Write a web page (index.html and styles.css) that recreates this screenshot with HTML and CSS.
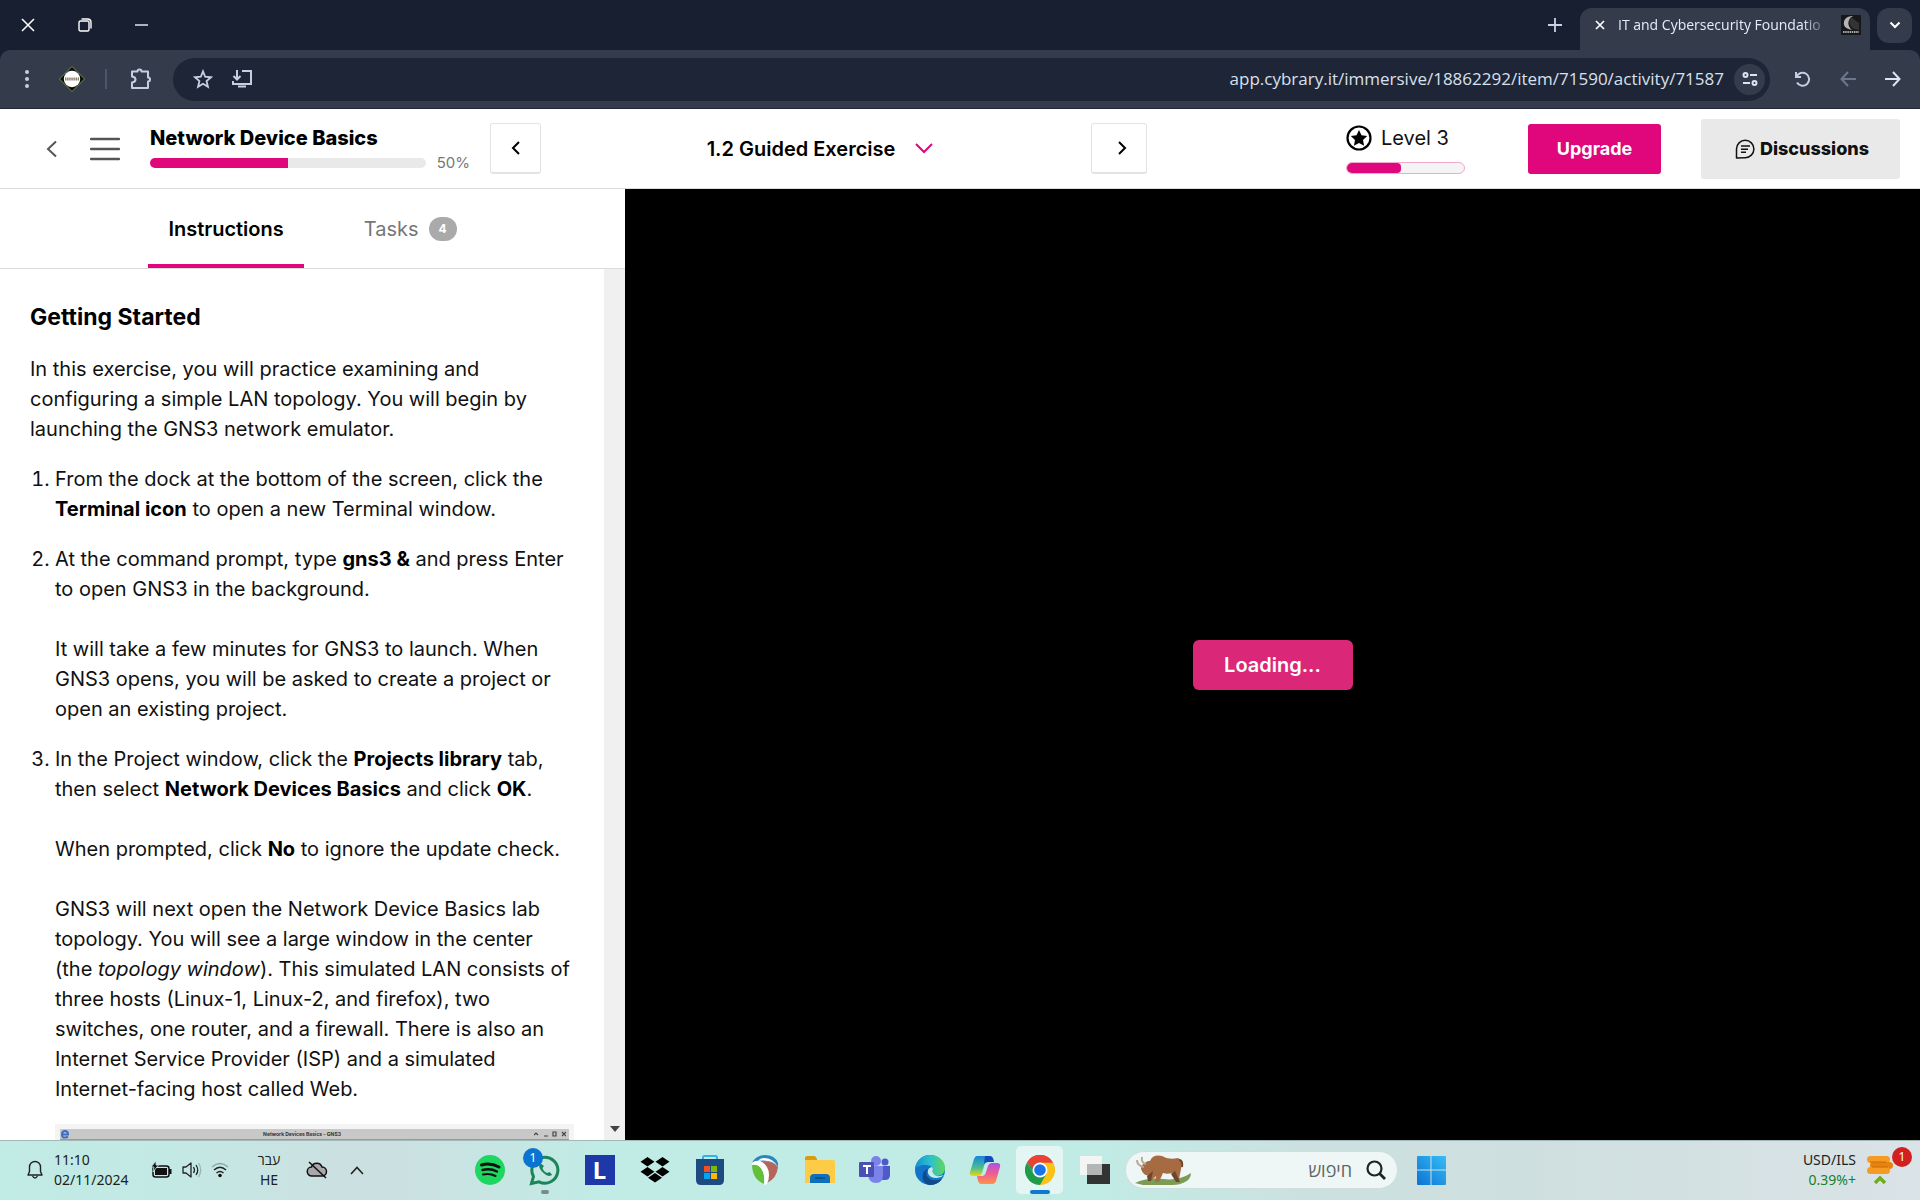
FILE: index.html
```html
<!DOCTYPE html>
<html lang="en">
<head>
<meta charset="utf-8">
<title>IT and Cybersecurity Foundations</title>
<link rel="stylesheet" href="styles.css">
</head>
<body>
<header class="browser">
  <div class="tabstrip">
    <div class="window-controls">
      <button class="icon-btn" aria-label="Close window"><svg width="14" height="14" viewBox="0 0 14 14"><path d="M1 1l12 12M13 1L1 13" stroke="#fff" stroke-width="1.5"/></svg></button>
      <button class="icon-btn" aria-label="Restore window"><svg width="14" height="14" viewBox="0 0 14 14" fill="none" stroke="#fff" stroke-width="1.4"><rect x="1" y="3" width="10" height="10" rx="1.5"/><path d="M3.500 1h6Q13 1 13 4.500v6"/></svg></button>
      <button class="icon-btn" aria-label="Minimize window"><svg width="14" height="14" viewBox="0 0 14 14"><path d="M0 7h13" stroke="#dfe5f0" stroke-width="1.500"/></svg></button>
    </div>
    <div class="tabs-right">
      <button class="icon-btn new-tab" aria-label="New tab"><svg width="14" height="14" viewBox="0 0 14 14"><path d="M7 0v14M0 7h14" stroke="#c9d2e4" stroke-width="1.800"/></svg></button>
      <div class="page-tab">
        <button class="icon-btn" aria-label="Close tab"><svg width="10" height="10" viewBox="0 0 10 10"><path d="M1 1l8 8M9 1L1 9" stroke="#fff" stroke-width="1.700"/></svg></button>
        <span class="page-tab-title">IT and Cybersecurity Foundatio</span>
        <svg width="20" height="20" viewBox="0 0 20 20"><rect width="20" height="20" fill="#17181b"/><path d="M12 1C5 1 2 5 3 10c1 3 4 4 8 5C7 12 5 5 12 1z" fill="#b4b4b4"/><path d="M10 2l8 6v7l-5-1C8 11 7 6 10 2z" fill="#333"/><path d="M2 17h16" stroke="#aaa" stroke-width="2" stroke-dasharray="1.500 .7"/></svg>
      </div>
      <button class="icon-btn tab-search" aria-label="Search tabs"><svg width="12" height="8" viewBox="0 0 12 8" fill="none"><path d="M1.500 1.500L6 6l4.500-4.500" stroke="#fff" stroke-width="2"/></svg></button>
    </div>
  </div>
  <div class="toolbar">
    <button class="icon-btn" aria-label="Browser menu"><svg width="6" height="20" viewBox="0 0 6 20" fill="#c5cfe2"><circle cx="3" cy="3" r="2"/><circle cx="3" cy="10" r="2"/><circle cx="3" cy="17" r="2"/></svg></button>
    <button class="icon-btn profile" aria-label="Profile"><svg width="28" height="28" viewBox="0 0 28 28"><path d="M14 1.500L26.500 14 14 26.500 1.500 14z" fill="#0b0d0a" stroke="#7d8a50"/><circle cx="14" cy="14" r="8.200" fill="#fff"/><path d="M7 14h14" stroke="#8f836c" stroke-width="3" stroke-dasharray="1.500 .6"/></svg></button>
    <span class="divider"></span>
    <button class="icon-btn extensions" aria-label="Extensions"><svg width="22" height="22" viewBox="0 0 22 22" fill="none" stroke="#c5cfe2" stroke-width="2" stroke-linejoin="round"><path d="M2 3.500h5.500Q7.500 1.500 9.500 1.500T11.500 3.500H18v6q2 0 2 2t-2 2v6.500H2v-5.500q3.500-.5 3.500-3T2 8.500z"/></svg></button>
    <div class="address">
      <button class="icon-btn" aria-label="Bookmark"><svg width="20" height="20" viewBox="0 0 24 24" fill="none" stroke="#c5cfe2" stroke-width="2.200"><path d="M12 2.800l2.600 6.500 7 .6-5.300 4.600 1.600 6.800-5.900-3.600-5.900 3.600 1.600-6.800L2.400 9.900l7-.6z"/></svg></button>
      <button class="icon-btn" aria-label="Install app"><svg width="22" height="20" viewBox="0 0 22 20" fill="none" stroke="#c5cfe2" stroke-width="2"><path d="M11 2h9v13H2v-3M6 1v9M2.500 7L6 10.500 9.500 7M7 17.500h8"/></svg></button>
      <input class="url" type="text" aria-label="Address" value="app.cybrary.it/immersive/18862292/item/71590/activity/71587">
      <button class="icon-btn site-info" aria-label="Site information"><svg width="16" height="14" viewBox="0 0 16 14" fill="none" stroke="#dce4f3" stroke-width="2"><circle cx="3.500" cy="3" r="2"/><path d="M8 3h7M1 11h7"/><circle cx="12.500" cy="11" r="2"/></svg></button>
    </div>
    <button class="icon-btn" aria-label="Reload"><svg width="16" height="16" viewBox="0 0 16 16" fill="none" stroke="#c5cfe2" stroke-width="2"><path d="M1 1v5h5M1.500 6A6.500 6.500 0 1 1 2 11.500"/></svg></button>
    <button class="icon-btn" aria-label="Forward"><svg width="16" height="16" viewBox="0 0 16 16" fill="none" stroke="#6c778c" stroke-width="2"><path d="M16 8H2M8 1L1.500 8 8 15"/></svg></button>
    <button class="icon-btn" aria-label="Back"><svg width="16" height="16" viewBox="0 0 16 16" fill="none" stroke="#dce4f3" stroke-width="2"><path d="M0 8h14M8 1l6.500 7L8 15"/></svg></button>
  </div>
</header>

<div class="course-bar">
  <button class="icon-btn" aria-label="Back"><svg width="12" height="18" viewBox="0 0 12 18" fill="none"><path d="M10 1.500L2 9l8 7.500" stroke="#555" stroke-width="2"/></svg></button>
  <button class="icon-btn course-menu" aria-label="Course menu"><svg width="30" height="24" viewBox="0 0 30 24"><path d="M1 2h28M1 12h28M1 22h28" stroke="#555" stroke-width="2.500" stroke-linecap="round"/></svg></button>
  <div class="course">
    <h1 class="course-title">Network Device Basics</h1>
    <div class="course-progress"><div class="track"><div class="fill"></div></div><span>50%</span></div>
  </div>
  <button class="step prev" aria-label="Previous activity"><svg width="10" height="16" viewBox="0 0 10 16" fill="none"><path d="M8 2L2 8l6 6" stroke="#000" stroke-width="2"/></svg></button>
  <button class="activity">1.2 Guided Exercise<svg width="18" height="11" viewBox="0 0 18 11" fill="none"><path d="M1 1l8 8 8-8" stroke="#e0067b" stroke-width="2"/></svg></button>
  <button class="step next" aria-label="Next activity"><svg width="10" height="16" viewBox="0 0 10 16" fill="none"><path d="M2 2l6 6-6 6" stroke="#000" stroke-width="2"/></svg></button>
  <div class="level">
    <div class="level-name"><svg width="26" height="26" viewBox="0 0 26 26"><circle cx="13" cy="13" r="11.500" fill="none" stroke="#000" stroke-width="2.200"/><path d="M13 5l2.500 5.300 5.700.7-4.200 4 1.100 5.700L13 17.900l-5.100 2.800L9 15l-4.200-4 5.700-.7z"/></svg>Level 3</div>
    <div class="level-track"><div class="level-fill"></div></div>
  </div>
  <button class="upgrade">Upgrade</button>
  <button class="discussions"><svg width="20" height="20" viewBox="0 0 20 20" fill="none" stroke="#111" stroke-width="1.500"><path d="M1.500 19v-9a8.700 8.700 0 1 1 8.700 8.700z" stroke-linejoin="round"/><path d="M6 7h9M6 10.200h7M6 13.200h5"/></svg>Discussions</button>
</div>

<div class="workspace">
  <section class="panel">
    <nav class="panel-tabs">
      <button class="panel-tab active">Instructions</button>
      <button class="panel-tab">Tasks<span class="count">4</span></button>
    </nav>
    <div class="panel-body">
      <article class="guide">
        <h2>Getting Started</h2>
        <p>In this exercise, you will practice examining and configuring a simple LAN topology. You will begin by launching the GNS3 network emulator.</p>
        <ol>
          <li><p>From the dock at the bottom of the screen, click the <b>Terminal icon</b> to open a new Terminal window.</p></li>
          <li><p>At the command prompt, type <b>gns3 &amp;</b> and press Enter to open GNS3 in the background.<br><br>It will take a few minutes for GNS3 to launch. When GNS3 opens, you will be asked to create a project or open an existing project.</p></li>
          <li><p>In the Project window, click the <b>Projects library</b> tab, then select <b>Network Devices Basics</b> and click <b>OK</b>.<br><br>When prompted, click <b>No</b> to ignore the update check.<br><br>GNS3 will next open the Network Device Basics lab topology. You will see a large window in the center (the <i>topology window</i>). This simulated LAN consists of three hosts (Linux-1, Linux-2, and firefox), two switches, one router, and a firewall. There is also an Internet Service Provider (ISP) and a simulated Internet-facing host called Web.</p>
            <figure class="shot"><div class="shot-bar"><svg width="10" height="10" viewBox="0 0 10 10" fill="none"><path d="M2 5.500h6Q8 2 5 2T2 5.500 5 8.500q2 0 3-1" stroke="#3f6fc4" stroke-width="2"/></svg><span>Network Devices Basics - GNS3</span><svg width="32" height="6" viewBox="0 0 32 6" fill="none" stroke="#444" stroke-width="1.200"><path d="M0 4l2-2 2 2M10 5h4M19 1h3v4h-3zM28 1l4 4M32 1l-4 4"/></svg></div></figure>
          </li>
        </ol>
      </article>
      <div class="scrollbar"><svg width="12" height="8" viewBox="0 0 12 8"><path d="M1 1h10L6 7z" fill="#444"/></svg></div>
    </div>
  </section>
  <main class="lab"><button class="loading">Loading...</button></main>
</div>

<footer class="taskbar">
  <div class="tray">
    <svg class="bell" width="16" height="20" viewBox="0 0 16 20" fill="none" stroke="#222" stroke-width="1.400" stroke-linejoin="round"><path d="M1 15l1.500-3.500V7a5.500 5.500 0 0 1 11 0v4.500L15 15zM5.500 16q2.500 4 5 0"/></svg>
    <div class="clock"><span>11:10</span><span>02/11/2024</span></div>
    <div class="status">
      <svg width="22" height="18" viewBox="0 0 22 18"><rect x="2" y="5" width="16" height="11" rx="2.500" fill="none" stroke="#111" stroke-width="1.500"/><path d="M4 7h12v7H4zM18 8h2.500v5H18z" fill="#111"/><path d="M5 0L0 6h3L2 11l5.500-7H5z" fill="#111" stroke="#c3e9e4" stroke-width=".8"/></svg>
      <svg width="20" height="18" viewBox="0 0 20 18" fill="none" stroke="#222" stroke-width="1.300"><path d="M1 6h3l5-4v14l-5-4H1z" stroke-linejoin="round"/><path d="M11.500 6q2 3 0 6M14 4q3.500 5 0 10"/><path d="M16.500 2q4.500 7 0 14" stroke="#9bb5b5"/></svg>
      <svg width="18" height="16" viewBox="0 0 18 16" fill="none" stroke="#222" stroke-width="1.400"><path d="M1 5q8-7 16 0" stroke="#8aa5a6"/><path d="M3 8q6-5.500 12 0M5.500 11q3.500-3 7 0"/><circle cx="9" cy="13.500" r="1.800" fill="#111" stroke="none"/></svg>
    </div>
    <div class="language"><span lang="he">עבר</span><span>HE</span></div>
    <svg width="22" height="18" viewBox="0 0 22 18" fill="none" stroke="#111" stroke-width="1.500"><path d="M6 15a4.500 4.500 0 0 1-.5-9 5.500 5.500 0 0 1 10.500 0 4.500 4.500 0 0 1 0 9z" fill="#a9a9ac"/><path d="M3 1l17 16"/></svg>
    <svg class="tray-caret" width="14" height="9" viewBox="0 0 14 9" fill="none"><path d="M1 8l6-6.500L13 8" stroke="#222" stroke-width="1.600"/></svg>
  </div>
  <div class="dock">
    <button class="app" aria-label="Spotify"><svg width="30" height="30" viewBox="0 0 30 30" fill="none"><circle cx="15" cy="15" r="15" fill="#1ed760"/><g stroke="#101010" stroke-linecap="round"><path d="M6.500 10q9-2.500 17.500 2" stroke-width="3"/><path d="M7.500 15q8-2 14.500 1.500" stroke-width="2.400"/><path d="M8 19.500q7-1.500 12.500 1.500" stroke-width="2"/></g></svg></button>
    <button class="app" aria-label="WhatsApp"><svg width="32" height="32" viewBox="0 0 32 32" fill="none"><path d="M2.500 29.500l2-7A13 13 0 1 1 10 27.800z" stroke="#1c8558" stroke-width="3"/><path d="M11 9c-2 3 0 7 3.500 10s7 4 8.500 1.500l-2.500-2.500-2.500 1c-2.500-1-4-3-4.500-5l1.500-2z" fill="#1c8558"/></svg><span class="badge blue">1</span><span class="running"></span></button>
    <button class="app" aria-label="L"><span class="letter">L</span></button>
    <button class="app" aria-label="Dropbox"><svg width="30" height="26" viewBox="0 0 30 26"><path d="M7.500 0l7 4.800-7 4.800-7-4.800zM22.500 0l7 4.800-7 4.800-7-4.800zM7.500 10l7 4.800-7 4.800-7-4.800zM22.500 10l7 4.800-7 4.800-7-4.800zM15 16l7 4.800-7 4.800-7-4.800z"/></svg></button>
    <button class="app" aria-label="Store"><svg width="30" height="30" viewBox="0 0 30 30"><path d="M8 5V2.500Q8 1 9.500 1h11Q22 1 22 2.500V5" fill="none" stroke="#2fb3ea" stroke-width="2"/><path d="M1 4h28v21q0 5-5 5H6q-5 0-5-5z" fill="#1d4a80"/><path d="M9 11h6v6H9z" fill="#f25022"/><path d="M16 11h6v6h-6z" fill="#7fba00"/><path d="M9 18h6v6H9z" fill="#00a4ef"/><path d="M16 18h6v6h-6z" fill="#ffb900"/></svg></button>
    <button class="app" aria-label="Reaper"><svg width="28" height="30" viewBox="0 0 28 30"><path d="M1 8Q5 0 14 0q10 0 13 8v4Q21 5 6 6z" fill="#2c86bd"/><path d="M6 6q16-1 21 6-1 11-11 16Q17 12 6 6z" fill="#b5655a"/><path d="M1 9q9 0 11 8 2 5 1 12Q1 24 1 9z" fill="#62bf3a"/><path d="M1 8q3-3 8-2 9 4 9 14 0 5-2 9l-3 1q1-11-2-15Q8 9 1 10z" fill="#fff"/><path d="M7 6q14-2 20 6-5-9-14-9-4 0-6 3z" fill="#fff"/></svg></button>
    <button class="app" aria-label="Files"><svg width="30" height="28" viewBox="0 0 30 28"><path d="M0 2q0-2 2-2h8l2 3v4H0z" fill="#d69c12"/><path d="M0 4h28q2 0 2 2v21H0z" fill="#fdcb45"/><path d="M5 27v-5q0-4 4-4h12q4 0 4 4v5z" fill="#0c71bd"/><path d="M10 22h10" stroke="#075391" stroke-width="2"/></svg></button>
    <button class="app" aria-label="Teams"><svg width="32" height="28" viewBox="0 0 32 28"><circle cx="17" cy="5" r="5" fill="#7b83eb"/><circle cx="26" cy="6" r="3.500" fill="#5059c9"/><path d="M22 10h9v9q0 5-5 5h-4z" fill="#5059c9"/><path d="M9 10h15v9q0 8-7 8t-8-8z" fill="#7b83eb"/><rect y="6" width="15" height="15" rx="1" fill="#4b50b4"/><path d="M4 10h8M8 10v8" stroke="#fff" stroke-width="2"/></svg></button>
    <button class="app" aria-label="Edge"><svg width="30" height="30" viewBox="0 0 30 30"><defs><linearGradient id="edge-top"><stop offset="0" stop-color="#178fd0"/><stop offset=".5" stop-color="#2cc0cf"/><stop offset="1" stop-color="#61d856"/></linearGradient></defs><circle cx="15" cy="15" r="15" fill="#1174c9"/><path d="M0 14C1 5 8 0 15 0c9 0 15 6 15 13 0 6-5 8-9 8-3 0-5-1-4-3 3-4 0-8-6-8S1 12 0 14z" fill="url(#edge-top)"/><path d="M13 14c-5 5 1 15 14 10-3 4-7 6-12 6C5 29 6 15 13 14z" fill="#114a8b"/><path d="M17 12q-5 1-4 6 1 5 9 5 4 0 7-3-9 3-11-2-1-2 0-4z" fill="#c5ece7"/></svg></button>
    <button class="app" aria-label="Copilot"><svg width="32" height="30" viewBox="0 0 32 30"><defs><linearGradient id="cop-a" x2="0" y2="1"><stop stop-color="#1686dd"/><stop offset=".6" stop-color="#4abf91"/><stop offset="1" stop-color="#f3d30f"/></linearGradient><linearGradient id="cop-b" x2="0" y2="1"><stop stop-color="#b14fe5"/><stop offset=".5" stop-color="#ee5d92"/><stop offset="1" stop-color="#ff9348"/></linearGradient></defs><path d="M8 1h13q3 0 4 6h-6q-3 0-4 4l-2 7q-1 3-4 3H4q-4 0-3-4L5 4q1-3 3-3z" fill="url(#cop-a)"/><path d="M16 1h5q3 0 4 6h-6q-3 0-4 2z" fill="#1748bb"/><path d="M24 29H12q-3 0-4-8h5q3 0 4-4l2-6q1-3 4-3h5q4 0 3 4l-4 14q-1 3-3 3z" fill="url(#cop-b)"/></svg></button>
    <button class="app current" aria-label="Chrome"><svg width="30" height="30" viewBox="0 0 30 30"><path d="M15 15L2 7.500A15 15 0 0 1 28 7.500z" fill="#ea4335"/><path d="M15 15V7.500h13A15 15 0 0 1 15 30z" fill="#fbc116"/><path d="M2 7.500A15 15 0 0 0 15 30l6.500-11.500L15 15 8.500 18.500z" fill="#1e9b4b"/><path d="M2 7.500h13v7.500l-6.500 3.500z" fill="#1e9b4b"/><path d="M2 7.500A15 15 0 0 1 28 7.500H15q-6 0-7.500 6z" fill="#ea4335"/><circle cx="15" cy="15" r="7.500" fill="#fff"/><circle cx="15" cy="15" r="5.800" fill="#1a73e8"/></svg><span class="running"></span></button>
    <button class="app" aria-label="Task view"><svg width="30" height="28" viewBox="0 0 30 28"><path d="M7 8h23v20H7z" fill="#333"/><path d="M0 0h22v19H0z" fill="#f4f4f4"/><path d="M7 8h15v11H7z" fill="#b4b6b6"/></svg></button>
    <label class="search">
      <svg width="56" height="30" viewBox="0 0 56 30"><path d="M0 28q12-6 28-4 16 2 28-6 0 7-8 10-4 2-10 2H8z" fill="#7c9c56"/><path d="M15 6Q18-1 27 1q6 4 16 2 5 2 3 11l-2 10h-3l-1-7q-6 3-12 1l-4 9h-4l1-6-5 5h-3l2-6q-6 2-9-6 0-5 7-8z" fill="#a66b43"/><path d="M18 16l-2 10h-3l-1-5zM40 16l5 11h-4l-5-8z" fill="#70452d"/><path d="M44 5q4 0 3 7" fill="none" stroke="#70452d" stroke-width="2"/><path d="M9 12Q2 11 2 5M11 9Q6 8 7 2" fill="none" stroke="#b9a896" stroke-width="2"/></svg>
      <input type="text" lang="he" dir="rtl" placeholder="חיפוש" aria-label="חיפוש">
      <svg width="20" height="20" viewBox="0 0 20 20" fill="none" stroke="#1c2424" stroke-width="2.200"><circle cx="8.500" cy="8.500" r="7"/><path d="M13.500 13.500L19 19" stroke-width="2.800"/></svg>
    </label>
    <button class="app" aria-label="Start"><svg width="30" height="30" viewBox="0 0 30 30"><defs><linearGradient id="win" x1="1" x2="0" y2="1"><stop stop-color="#36bdf5"/><stop offset="1" stop-color="#0b73d4"/></linearGradient></defs><path d="M1 2q0-1 1-1h12.500v13.500H1zM15.500 1H29q1 0 1 1v12.500H15.500zM1 15.500h13.500V30H2q-1 0-1-1zM15.500 15.500H30V29q0 1-1 1H15.500z" fill="url(#win)"/></svg></button>
  </div>
  <div class="widget">
    <div class="rate"><span>USD/ILS</span><span class="change">0.39%+</span></div>
    <div class="coins"><svg width="28" height="30" viewBox="0 0 28 30" fill="#f59a23"><rect x="1" y="1" width="23" height="7" rx="3.500"/><rect x="4" y="7" width="23" height="7" rx="3.500" fill="#e8820e"/><rect x="1" y="12" width="23" height="7" rx="3.500"/><path d="M4 7h16M6 12h16" stroke="#c96c08" stroke-width="1"/><path d="M9 28l5-5 5 5" fill="none" stroke="#6fae1a" stroke-width="3.500"/></svg><span class="badge red">1</span></div>
  </div>
</footer>
</body>
</html>
```

FILE: styles.css
```css
* { box-sizing: border-box; }

body {
  margin: 0;
  height: 100vh;
  display: flex;
  flex-direction: column;
  overflow: hidden;
  font-family: Inter, "Liberation Sans", sans-serif;
  font-size: 20px;
  line-height: 30px;
  color: #111;
  background: #fff;
}

button, input { font: inherit; color: inherit; border: 0; background: none; padding: 0; margin: 0; }
svg { display: block; flex: none; }
.icon-btn { display: flex; align-items: center; justify-content: center; flex: none; }

/* Browser frame */
.browser {
  flex: none;
  background: #181f30;
  color: #e6ecf7;
  font-family: "Open Sans", "Noto Sans", sans-serif;
}
.tabstrip { display: flex; justify-content: space-between; height: 50px; padding: 0 8px 0 21px; }
.window-controls { display: flex; align-items: center; gap: 43px; }
.tabs-right { display: flex; align-items: center; }
.new-tab { margin-right: 18px; }
.page-tab {
  display: flex;
  align-items: center;
  gap: 13px;
  width: 290px;
  height: 42px;
  margin: 8px 7px 0 0;
  padding: 0 9px 8px 15px;
  border-radius: 12px 12px 0 0;
  background: #343c4c;
  font-size: 14px;
  line-height: 20px;
}
.page-tab-title {
  flex: 1;
  overflow: hidden;
  white-space: nowrap;
  mask-image: linear-gradient(90deg, #000 88%, transparent);
}
.tab-search { width: 35px; height: 35px; border-radius: 12px; background: #343c4c; }
.toolbar {
  display: flex;
  align-items: center;
  gap: 29px;
  height: 59px;
  padding: 0 19px 0 24px;
  border-bottom: 1px solid #20283a;
  border-radius: 10px 10px 0 0;
  background: #343c4c;
}
.profile { margin-left: -1px; }
.divider { width: 2px; height: 20px; margin-left: -10px; background: #4b566b; }
.extensions { margin: 0 -8px 0 -6px; }
.address {
  flex: 1;
  display: flex;
  align-items: center;
  gap: 18px;
  height: 43px;
  margin-right: -4px;
  padding: 0 5px 0 20px;
  border-radius: 22px;
  background: #1e2536;
}
.url { flex: 1; min-width: 0; text-align: right; font-size: 17px; line-height: 26px; color: #d9e0ed; margin-right: -8px; }
.site-info { width: 31px; height: 31px; border-radius: 50%; background: #343c4c; }

/* Course header */
.course-bar {
  flex: none;
  display: flex;
  align-items: center;
  height: 80px;
  padding: 0 20px 0 46px;
  border-bottom: 1px solid #dcdcdc;
}
.course-menu { margin: 0 30px 0 32px; }
.course { width: 320px; margin-right: 20px; padding-top: 3px; }
.course-title { margin: 0; font-size: 20px; line-height: 26px; font-weight: 800; color: #000; }
.course-progress { display: flex; align-items: center; gap: 11px; height: 24px; font-size: 15px; color: #777; }
.track { flex: 1; height: 10px; border-radius: 5px; background: #e9e9e9; overflow: hidden; }
.fill { width: 50%; height: 100%; background: #e0067b; }
.step {
  display: flex;
  align-items: center;
  justify-content: center;
  width: 51px;
  height: 51px;
  border: 1px solid #e3e3e3;
  border-bottom-width: 2px;
  border-radius: 3px;
}
.next { width: 56px; padding-left: 6px; }
.activity { flex: 1; display: flex; align-items: center; justify-content: center; gap: 20px; padding-left: 8px; font-weight: 600; color: #000; }
.level { width: 119px; margin: 0 63px 0 199px; }
.level-name { display: flex; align-items: center; gap: 9px; margin-bottom: 9px; }
.level-track { height: 12px; border: 1px solid #f2a9cf; border-radius: 6px; background: #f4f4f4; overflow: hidden; }
.level-fill { width: 46%; height: 100%; border-radius: 0 4px 4px 0; background: #e0067b; }
.upgrade { width: 133px; height: 50px; border-radius: 3px; background: #e0067b; color: #fff; font-size: 18px; font-weight: 700; }
.discussions {
  display: flex;
  align-items: center;
  justify-content: center;
  gap: 5px;
  width: 199px;
  height: 60px;
  margin-left: 40px;
  padding-left: 3px;
  border-radius: 3px;
  background: #e9e9e9;
  font-size: 18px;
  font-weight: 800;
}

/* Instructions and lab */
.workspace { flex: 1; min-height: 0; display: grid; grid-template-columns: 625fr 1295fr; grid-template-rows: minmax(0, 1fr); }
.panel { display: flex; flex-direction: column; min-width: 0; min-height: 0; }
.panel-tabs { flex: none; display: flex; justify-content: center; gap: 40px; height: 80px; border-bottom: 1px solid #dcdcdc; }
.panel-tab { display: flex; align-items: center; gap: 10px; padding: 4px 20px 0; border-bottom: 4px solid transparent; color: #777; }
.panel-tab.active { border-color: #e0067b; color: #000; font-weight: 600; }
.count { padding: 0 10px; border-radius: 12px; background: #aaa; color: #fff; font-size: 12px; line-height: 24px; font-weight: 700; }
.panel-body { flex: 1; min-height: 0; display: flex; overflow: hidden; }
.guide { flex: 1; min-width: 0; padding: 33px 30px 0; }
.guide h2 { margin: 0 0 22px; font-size: 23px; line-height: 30px; font-weight: 700; color: #000; }
.guide p { margin: 0 0 20px; }
.guide ol { margin: 0; padding-left: 25px; }
.guide b { font-weight: 700; color: #000; }
.shot { margin: 0; padding: 5px; background: #f4f4f4; }
.shot-bar { display: flex; align-items: center; justify-content: space-between; height: 11px; padding-right: 3px; background: #c8c8c8; font-size: 5px; line-height: 10px; font-weight: 700; color: #333; border-bottom: 1px solid #999; }
.scrollbar { width: 21px; display: flex; align-items: flex-end; justify-content: center; padding-bottom: 7px; background: #f0f0f0; }
.lab { display: flex; align-items: center; justify-content: center; background: #000; }
.loading { width: 160px; height: 50px; border-radius: 6px; background: #db2777; color: #fff; font-weight: 600; }

/* Taskbar */
.taskbar {
  flex: none;
  display: grid;
  grid-template-columns: 1fr auto 1fr;
  align-items: center;
  height: 60px;
  padding-bottom: 2px;
  border-top: 1px solid #a3b9b8;
  background: linear-gradient(90deg, #c1ebe5 0, #c3e9e4 9%, #cbe1e1 17%, #cbe1e1 21%, #c1ebe5 31%, #c1ebe5 57%, #cbe1df 68%, #cfdfdf 80%, #dae3e7 100%);
  font-family: "Noto Sans", "Open Sans", sans-serif;
  font-size: 15px;
  line-height: 20px;
  color: #1b2222;
}
.tray { display: flex; align-items: center; padding-left: 27px; }
.bell { margin-right: 11px; }
.clock { display: flex; flex-direction: column; width: 97px; font-size: 14px; }
.status { display: flex; align-items: center; gap: 9px; width: 105px; }
.language { display: flex; flex-direction: column; align-items: center; width: 26px; margin-right: 24px; font-size: 14px; }
.tray-caret { margin-left: 22px; }
.dock { display: flex; align-items: center; }
.app { position: relative; width: 55px; height: 58px; display: flex; align-items: center; justify-content: center; }
.app.current { width: 47px; height: 48px; margin: 0 4px; border-radius: 5px; background: #e4f6f3; }
.running { position: absolute; bottom: 5px; left: 50%; width: 8px; height: 4px; margin-left: -4px; border-radius: 2px; background: #788c8c; }
.current .running { bottom: 0; width: 20px; margin-left: -10px; background: #0f78d0; }
.badge { position: absolute; width: 20px; height: 20px; border-radius: 50%; color: #fff; font-size: 12px; line-height: 20px; text-align: center; }
.blue { top: 7px; left: 6px; background: #0b74d1; }
.red { top: -8px; right: -18px; background: #d21f1f; }
.letter { width: 30px; height: 30px; background: #1d38a9; color: #fff; font-size: 24px; line-height: 29px; font-weight: 700; text-align: center; }
.search { display: flex; align-items: center; gap: 14px; width: 273px; height: 38px; margin: 0 5px 0 3px; padding: 0 11px 0 9px; border: 1px solid #cfdedd; border-radius: 19px; background: #eff7f6; }
.search input { flex: 1; min-width: 0; font-size: 18px; line-height: 24px; }
.search input::placeholder { color: #5e6666; opacity: 1; }
.widget { display: flex; align-items: center; justify-content: flex-end; gap: 10px; padding-right: 26px; font-size: 14px; }
.rate { display: flex; flex-direction: column; align-items: flex-end; }
.change { color: #18802b; }
.coins { position: relative; }
```
